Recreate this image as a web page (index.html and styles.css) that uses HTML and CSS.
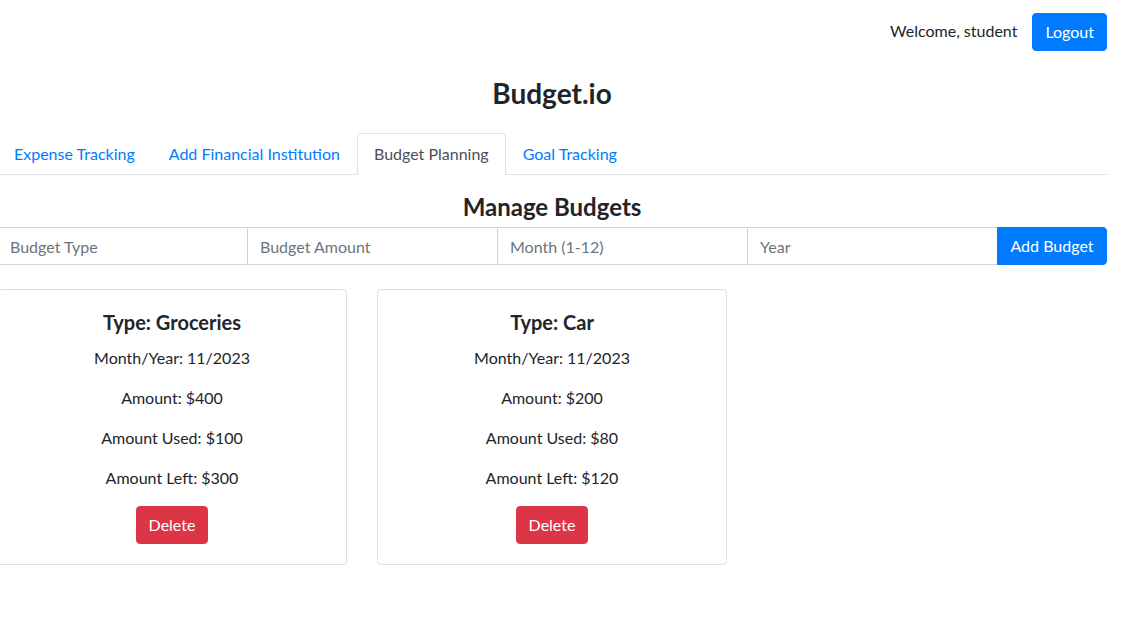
FILE: index.html
```html
<!DOCTYPE html>
<html lang="en">
<head>
<meta charset="utf-8">
<title>Budget.io</title>
<link rel="stylesheet" href="styles.css">
</head>
<body>
<div class="page">
  <header class="topbar">
    <span class="welcome">Welcome, student</span>
    <button class="btn btn-primary">Logout</button>
  </header>
  <h1 class="brand">Budget.io</h1>
  <nav class="tabs">
    <a class="tab">Expense Tracking</a>
    <a class="tab">Add Financial Institution</a>
    <a class="tab active">Budget Planning</a>
    <a class="tab">Goal Tracking</a>
  </nav>
  <h2 class="section-title">Manage Budgets</h2>
  <form class="input-group">
    <input class="field" type="text" placeholder="Budget Type">
    <input class="field" type="text" placeholder="Budget Amount">
    <input class="field" type="text" placeholder="Month (1-12)">
    <input class="field" type="text" placeholder="Year">
    <button type="button" class="btn btn-primary btn-append">Add Budget</button>
  </form>
  <div class="cards">
    <div class="card">
      <h3 class="card-title">Type: Groceries</h3>
      <p>Month/Year: 11/2023</p>
      <p>Amount: $400</p>
      <p>Amount Used: $100</p>
      <p>Amount Left: $300</p>
      <button class="btn btn-danger">Delete</button>
    </div>
    <div class="card">
      <h3 class="card-title">Type: Car</h3>
      <p>Month/Year: 11/2023</p>
      <p>Amount: $200</p>
      <p>Amount Used: $80</p>
      <p>Amount Left: $120</p>
      <button class="btn btn-danger">Delete</button>
    </div>
  </div>
</div>
</body>
</html>
```

FILE: styles.css
```css
* { box-sizing: border-box; }
html, body { margin: 0; padding: 0; background: #fff; }
body {
  font-family: Lato, "Noto Sans", "Liberation Sans", sans-serif;
  font-size: 16px;
  line-height: 1.5;
  color: #212529;
}
.page {
  margin-left: -3px;
  margin-right: 21px;
}
.topbar {
  display: flex;
  justify-content: flex-end;
  align-items: center;
  gap: 15px;
  padding-top: 13px;
}
.welcome { font-size: 16px; margin-top: -2px; }
.btn {
  font-family: inherit;
  font-size: 16px;
  line-height: 24px;
  padding: 6px 12px;
  border: 1px solid transparent;
  border-radius: 4px;
  color: #fff;
  cursor: pointer;
}
.btn-primary { background: #007bff; border-color: #007bff; }
.btn-danger { background: #dc3545; border-color: #dc3545; }
.brand {
  margin: 26px 0 22px;
  text-align: center;
  font-size: 28px;
  line-height: 1.2;
  font-weight: 700;
}
.tabs {
  display: flex;
  border-bottom: 1px solid #dee2e6;
}
.tab {
  display: block;
  padding: 8px 16px;
  margin-bottom: -1px;
  border: 1px solid transparent;
  border-top-left-radius: 4px;
  border-top-right-radius: 4px;
  color: #007bff;
  line-height: 24px;
}
.tab.active {
  color: #495057;
  background: #fff;
  border-color: #dee2e6 #dee2e6 #fff;
}
.section-title {
  margin: 18px 0 6px;
  text-align: center;
  font-size: 24px;
  line-height: 1.2;
  font-weight: 700;
}
.input-group {
  display: flex;
  margin: 0;
}
.field {
  flex: 1 1 0;
  min-width: 0;
  height: 38px;
  padding: 6px 12px;
  font-family: inherit;
  font-size: 16px;
  line-height: 24px;
  color: #495057;
  border: 1px solid #ced4da;
  border-radius: 0;
  margin-right: -1px;
}
.field:first-child { border-radius: 4px 0 0 4px; }
.field::placeholder { color: #6c757d; opacity: 1; }
.btn-append {
  flex: 0 0 auto;
  width: 110px;
  border-radius: 0 4px 4px 0;
}
.cards {
  display: flex;
  gap: 30px;
  margin-top: 24px;
}
.card {
  width: 350px;
  padding: 20px;
  border: 1px solid rgba(0,0,0,.125);
  border-radius: 4px;
  text-align: center;
}
.card-title {
  margin: 0 0 12px;
  font-size: 20px;
  line-height: 1.2;
  font-weight: 700;
}
.card p { margin: 0 0 16px; }
```
